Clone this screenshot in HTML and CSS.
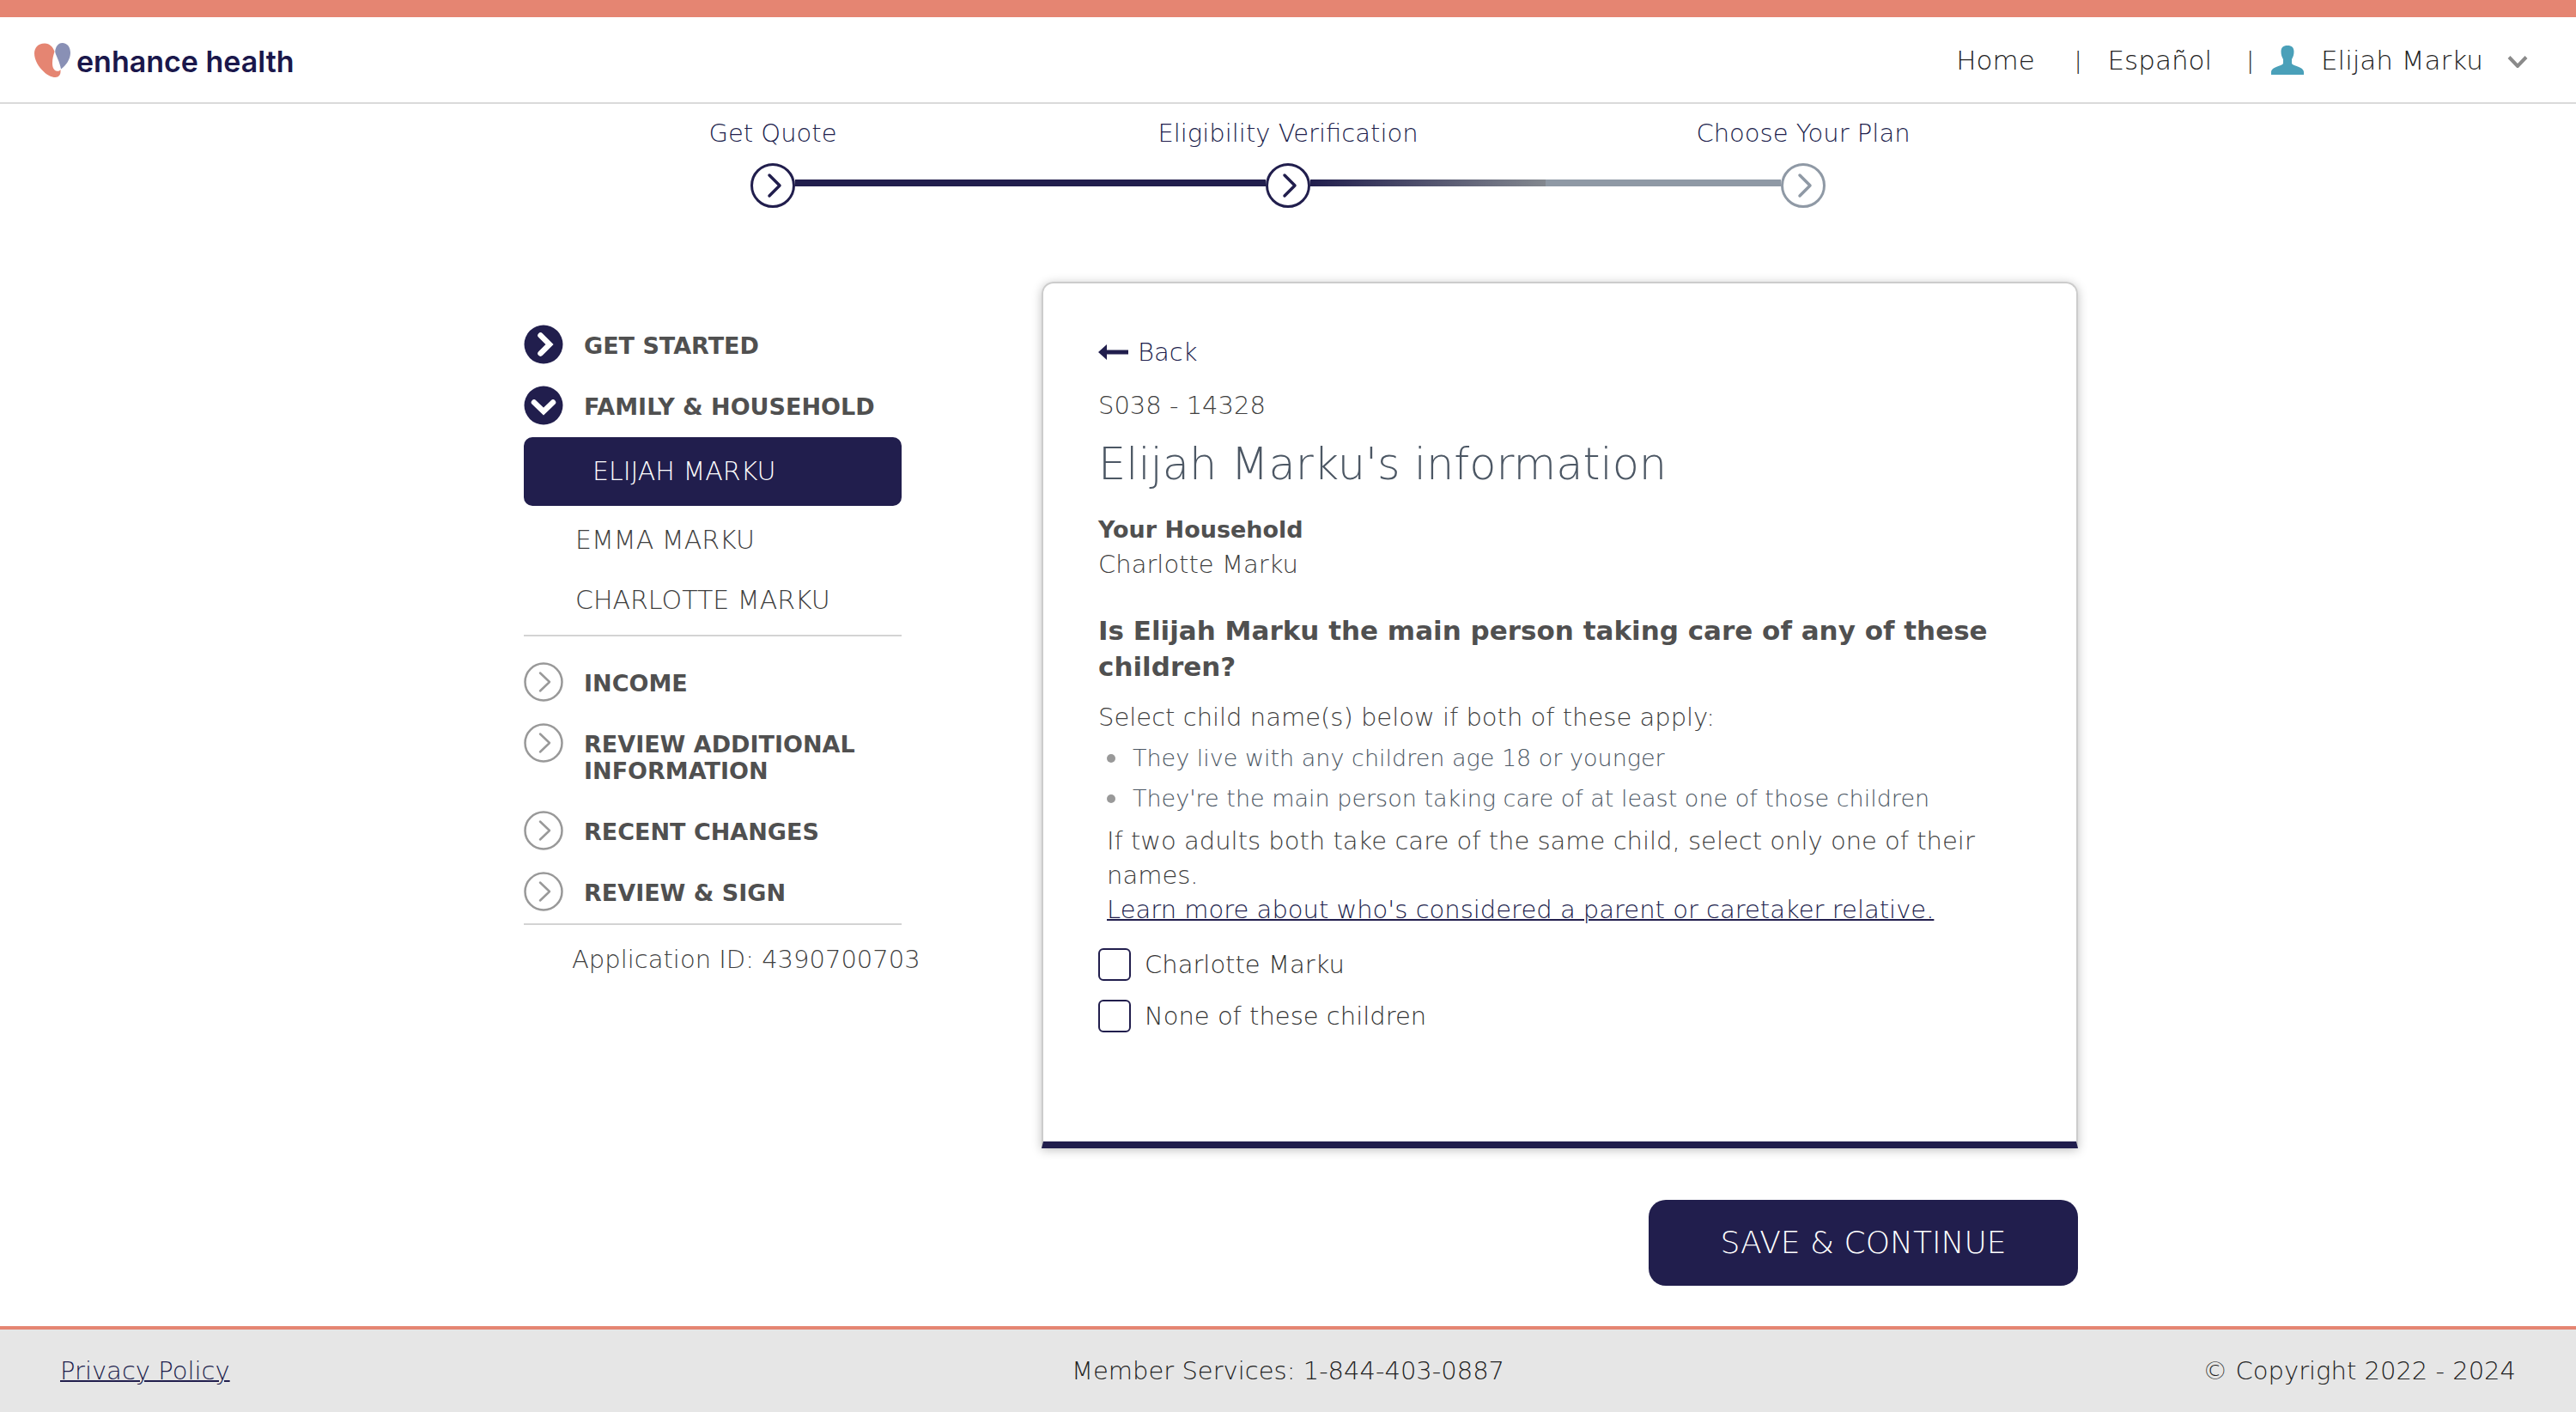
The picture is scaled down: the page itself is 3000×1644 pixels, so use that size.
FILE: index.html
```html
<!DOCTYPE html>
<html lang="en">
<head>
<meta charset="utf-8">
<meta name="viewport" content="width=device-width, initial-scale=1">
<title>Enhance Health - Eligibility Verification</title>
<link rel="stylesheet" href="styles.css">
</head>
<body>
<svg class="sprite" aria-hidden="true">
  <symbol id="step" viewBox="0 0 52 52">
    <circle cx="26" cy="26" r="24.5" fill="none" stroke="currentColor" stroke-width="3"/>
    <path d="M22 14l12 12-12 12" fill="none" stroke="currentColor" stroke-width="3.5" stroke-linecap="round" stroke-linejoin="round"/>
  </symbol>
  <symbol id="todo" viewBox="0 0 46 46">
    <circle cx="23" cy="23" r="21.5" fill="none" stroke="currentColor" stroke-width="2.5"/>
    <path d="M19 12.5l11 10.5-11 10.5" fill="none" stroke="currentColor" stroke-width="2.5" stroke-linecap="round" stroke-linejoin="round"/>
  </symbol>
  <symbol id="done" viewBox="0 0 46 46">
    <circle cx="23" cy="23" r="22.5" fill="currentColor"/>
    <path d="M19.5 12.500L30 23 19.5 33.500" fill="none" stroke="#fff" stroke-width="6.5" stroke-linecap="round" stroke-linejoin="miter"/>
  </symbol>
  <symbol id="open" viewBox="0 0 46 46">
    <circle cx="23" cy="23" r="22.5" fill="currentColor"/>
    <path d="M12 19.5L23 30 34 19.5" fill="none" stroke="#fff" stroke-width="6.5" stroke-linecap="round" stroke-linejoin="miter"/>
  </symbol>
</svg>

<header class="topbar">
  <a class="logo" href="#">
    <svg class="logo-mark" viewBox="0 0 42 40" aria-hidden="true">
      <path fill="#e58572" d="M12 .5C4 .5 0 6 0 12c0 8 5 16 11 21.500C15 37.500 20 40 24.500 40c4 0 6-3 6-6.500V31c-1 1.500-2.500 2-4 1.800-3.500-.300-5.500-4-5.500-9.300 0-5 1.200-9 2.500-13.500C22 5 18 .500 12 .500z"/>
      <path fill="#8990b5" d="M32.500 0C27.500 0 25 4.500 24.200 9.500c0 3 1.500 5 2.800 8.500 2 4.500 3.500 9 4 12.500C37 26 42 19 42 11.500 42 5 38.500 0 32.500 0z"/>
    </svg>
    <span>enhance health</span>
  </a>
  <nav class="topnav">
    <a href="#">Home</a>
    <span class="bar">|</span>
    <a href="#">Español</a>
    <span class="bar last">|</span>
    <button class="account" type="button">
      <svg class="person" viewBox="0 0 38 34" aria-hidden="true"><path fill="#4aa0b9" d="M19 0c-5 0-7.500 2.500-7.500 7 0 4 1 6.500 2.500 9v4.500c0 1.500-2 2-5 3.200C3.500 25.800 0 27.500 0 31v3h38v-3c0-3.500-3.500-5.200-9-7.300-3-1.200-5-1.700-5-3.200V16c1.500-2.500 2.500-5 2.500-9 0-4.500-2.500-7-7.500-7z"/></svg>
      <span>Elijah Marku</span>
      <svg class="caret" viewBox="0 0 24 14" aria-hidden="true"><path d="M2 1.500l10 10.500L22 1.500" fill="none" stroke="#8a8a8a" stroke-width="4"/></svg>
    </button>
  </nav>
</header>

<main class="page">
  <ol class="stepper">
    <li class="step done"><span class="step-label">Get Quote</span><span class="track"><svg><use href="#step"/></svg></span></li>
    <li class="step current"><span class="step-label">Eligibility Verification</span><span class="track"><svg><use href="#step"/></svg></span></li>
    <li class="step upcoming"><span class="step-label">Choose Your Plan</span><span class="track"><svg><use href="#step"/></svg></span></li>
  </ol>

  <div class="columns">
    <aside class="sidebar">
      <nav>
        <ul class="sections">
          <li><a class="section" href="#"><svg class="complete"><use href="#done"/></svg><span>GET STARTED</span></a></li>
          <li><a class="section" href="#"><svg class="complete"><use href="#open"/></svg><span>FAMILY &amp; HOUSEHOLD</span></a></li>
        </ul>
        <ul class="members">
          <li><a class="active" href="#">ELIJAH MARKU</a></li>
          <li><a href="#">EMMA MARKU</a></li>
          <li><a href="#">CHARLOTTE MARKU</a></li>
        </ul>
        <ul class="sections rest">
          <li><a class="section" href="#"><svg><use href="#todo"/></svg><span>INCOME</span></a></li>
          <li><a class="section" href="#"><svg><use href="#todo"/></svg><span>REVIEW ADDITIONAL INFORMATION</span></a></li>
          <li><a class="section" href="#"><svg><use href="#todo"/></svg><span>RECENT CHANGES</span></a></li>
          <li><a class="section" href="#"><svg><use href="#todo"/></svg><span>REVIEW &amp; SIGN</span></a></li>
        </ul>
      </nav>
      <p class="app-id">Application ID: 4390700703</p>
    </aside>

    <form class="form">
      <section class="card">
        <a class="back" href="#"><svg viewBox="0 0 36 20" aria-hidden="true"><path fill="currentColor" d="M0 10L10 1v6.500h25v5H10V19z"/></svg>Back</a>
        <p class="code">S038 - 14328</p>
        <h1>Elijah Marku's information</h1>
        <h2>Your Household</h2>
        <p>Charlotte Marku</p>
        <fieldset>
          <legend>Is Elijah Marku the main person taking care of any of these children?</legend>
          <p>Select child name(s) below if both of these apply:</p>
          <ul class="rules">
            <li>They live with any children age 18 or younger</li>
            <li>They're the main person taking care of at least one of those children</li>
          </ul>
          <div class="note">
            <p>If two adults both take care of the same child, select only one of their names.</p>
            <a href="#">Learn more about who's considered a parent or caretaker relative.</a>
          </div>
          <div class="choices">
            <label><input type="checkbox" name="child" value="charlotte">Charlotte Marku</label>
            <label><input type="checkbox" name="child" value="none">None of these children</label>
          </div>
        </fieldset>
      </section>
      <button class="save" type="submit">SAVE &amp; CONTINUE</button>
    </form>
  </div>
</main>

<footer class="footer">
  <a href="#">Privacy Policy</a>
  <span>Member Services: 1-844-403-0887</span>
  <span class="copyright">© Copyright 2022 - 2024</span>
</footer>
</body>
</html>
```
FILE: styles.css
```css
:root {
  --navy: #211e4d;
  --coral: #e58572;
  --text: #404040;
  --heading: #505050;
  --slate: #4c5764;
  --grey: #8f99a5;
  --rule: #d3d3d3;
}

* {
  box-sizing: border-box;
}

body {
  margin: 0;
  min-height: 100vh;
  display: flex;
  flex-direction: column;
  background: #fff;
  color: var(--text);
  font: 200 29px/40px "DejaVu Sans", sans-serif;
}

h1, h2, p, ul, ol, fieldset {
  margin: 0;
  padding: 0;
  border: 0;
}

ul, ol {
  list-style: none;
}

a {
  color: inherit;
  text-decoration: none;
}

button {
  border: 0;
  padding: 0;
  background: none;
  color: inherit;
  font: inherit;
  cursor: pointer;
}

.sprite {
  position: absolute;
  width: 0;
  height: 0;
}

/* Header */
.topbar {
  display: flex;
  align-items: center;
  justify-content: space-between;
  height: 121px;
  padding: 0 56px 0 40px;
  border-top: 20px solid var(--coral);
  border-bottom: 2px solid #dadada;
}

.logo {
  display: flex;
  align-items: center;
  gap: 7px;
  color: #1a174b;
  font: 600 34px/40px Inter, sans-serif;
}

.logo span {
  padding-top: 4px;
}

.logo-mark {
  width: 42px;
  height: 40px;
}

.topnav {
  display: flex;
  align-items: center;
  color: #222;
  font-size: 31px;
}

.bar {
  padding: 0 30px 0 46px;
  font-size: 26px;
}

.bar.last {
  padding: 0 20px 0 40px;
}

.account {
  display: flex;
  align-items: center;
  gap: 20px;
}

.person {
  width: 38px;
  height: 34px;
}

.caret {
  width: 24px;
  height: 14px;
  margin: 4px 0 0 8px;
}

/* Progress steps */
.stepper {
  display: grid;
  grid-template-columns: repeat(3, 1fr);
  width: 60%;
  margin: 0 auto;
  padding-top: 14px;
  color: var(--navy);
}

.step {
  display: flex;
  flex-direction: column;
  gap: 15px;
  text-align: center;
}

.track {
  display: flex;
  align-items: center;
}

.track svg {
  width: 52px;
  height: 52px;
}

.track::before,
.track::after {
  content: "";
  flex: 1;
  height: 8px;
  margin-bottom: 6px;
  background: var(--navy);
}

.done .track::before,
.upcoming .track::after {
  background: none;
}

.current .track::after {
  background: linear-gradient(90deg, var(--navy), #83888f);
}

.upcoming .track {
  color: var(--grey);
}

.upcoming .track::before {
  background: var(--grey);
}

/* Two-column layout */
.page {
  flex: 1;
}

.columns {
  display: grid;
  grid-template-columns: 440px minmax(0, 1fr);
  gap: 163px;
  max-width: 1840px;
  margin: 0 auto;
  padding: 86px 0 46px 30px;
}

/* Sidebar */
.sidebar {
  padding-top: 50px;
}

.sections {
  display: grid;
  gap: 25px;
}

.section {
  display: flex;
  gap: 24px;
  min-height: 46px;
  color: var(--heading);
  font-size: 27px;
  font-weight: 700;
  line-height: 31px;
}

.section svg {
  flex: none;
  width: 46px;
  height: 46px;
  color: #999;
}

.section .complete {
  color: var(--navy);
}

.section span {
  padding: 9px 0 6px;
}

.members {
  margin-top: 14px;
  padding-bottom: 5px;
  border-bottom: 2px solid var(--rule);
}

.members a {
  display: block;
  padding-left: 60px;
  font-size: 30px;
  line-height: 70px;
}

.members .active {
  margin-bottom: 5px;
  padding-left: 80px;
  border-radius: 10px;
  background: var(--navy);
  color: #fff;
  line-height: 80px;
}

.rest {
  padding: 30px 0 14px;
  border-bottom: 2px solid var(--rule);
}

.app-id {
  padding: 20px 0 0 56px;
  white-space: nowrap;
}

/* Form card */
.card {
  padding: 60px 34px 126px 64px;
  border: 2px solid #ccc;
  border-bottom: 8px solid var(--navy);
  border-radius: 14px 14px 0 0;
  box-shadow: 0 2px 12px rgba(0, 0, 0, 0.25);
}

.back {
  display: inline-flex;
  align-items: center;
  gap: 10px;
  color: var(--navy);
}

.back svg {
  width: 36px;
  height: 20px;
}

.code {
  margin-top: 22px;
}

h1 {
  margin-top: 19px;
  color: var(--slate);
  font-size: 51px;
  font-weight: 200;
  line-height: 60px;
}

h2 {
  margin-top: 26px;
  color: var(--heading);
  font-size: 27px;
  font-weight: 700;
  line-height: 40px;
}

legend {
  padding: 36px 0 18px;
  color: var(--heading);
  font-size: 31px;
  font-weight: 700;
  line-height: 42px;
}

.rules {
  display: grid;
  gap: 7px;
  padding: 8px 0 9px 10px;
  color: var(--slate);
  font-size: 27px;
}

.rules li {
  display: flex;
  align-items: center;
  gap: 20px;
}

.rules li::before {
  content: "";
  width: 10px;
  height: 10px;
  border-radius: 50%;
  background: #999;
}

.note {
  padding-left: 10px;
}

.note a {
  color: var(--navy);
  text-decoration: underline;
  text-decoration-thickness: 2px;
}

.choices {
  display: grid;
  justify-items: start;
  gap: 20px;
  margin-top: 24px;
}

.choices label {
  display: flex;
  align-items: center;
  gap: 16px;
  color: #333;
}

.choices input {
  appearance: none;
  width: 38px;
  height: 38px;
  margin: 0;
  border: 2px solid var(--navy);
  border-radius: 6px;
  background: #fff;
}

.choices input:checked {
  background: var(--navy);
}

.save {
  display: block;
  width: 500px;
  height: 100px;
  margin: 60px 0 0 auto;
  border-radius: 20px;
  background: var(--navy);
  color: #fff;
  font-size: 36px;
}

/* Footer */
.footer {
  display: grid;
  grid-template-columns: 1fr auto 1fr;
  align-items: center;
  height: 100px;
  padding: 0 70px;
  border-top: 4px solid var(--coral);
  background: #e6e6e6;
  color: #222;
}

.footer a {
  justify-self: start;
  color: var(--navy);
  text-decoration: underline;
  text-decoration-thickness: 2px;
}

.copyright {
  text-align: right;
}
```
